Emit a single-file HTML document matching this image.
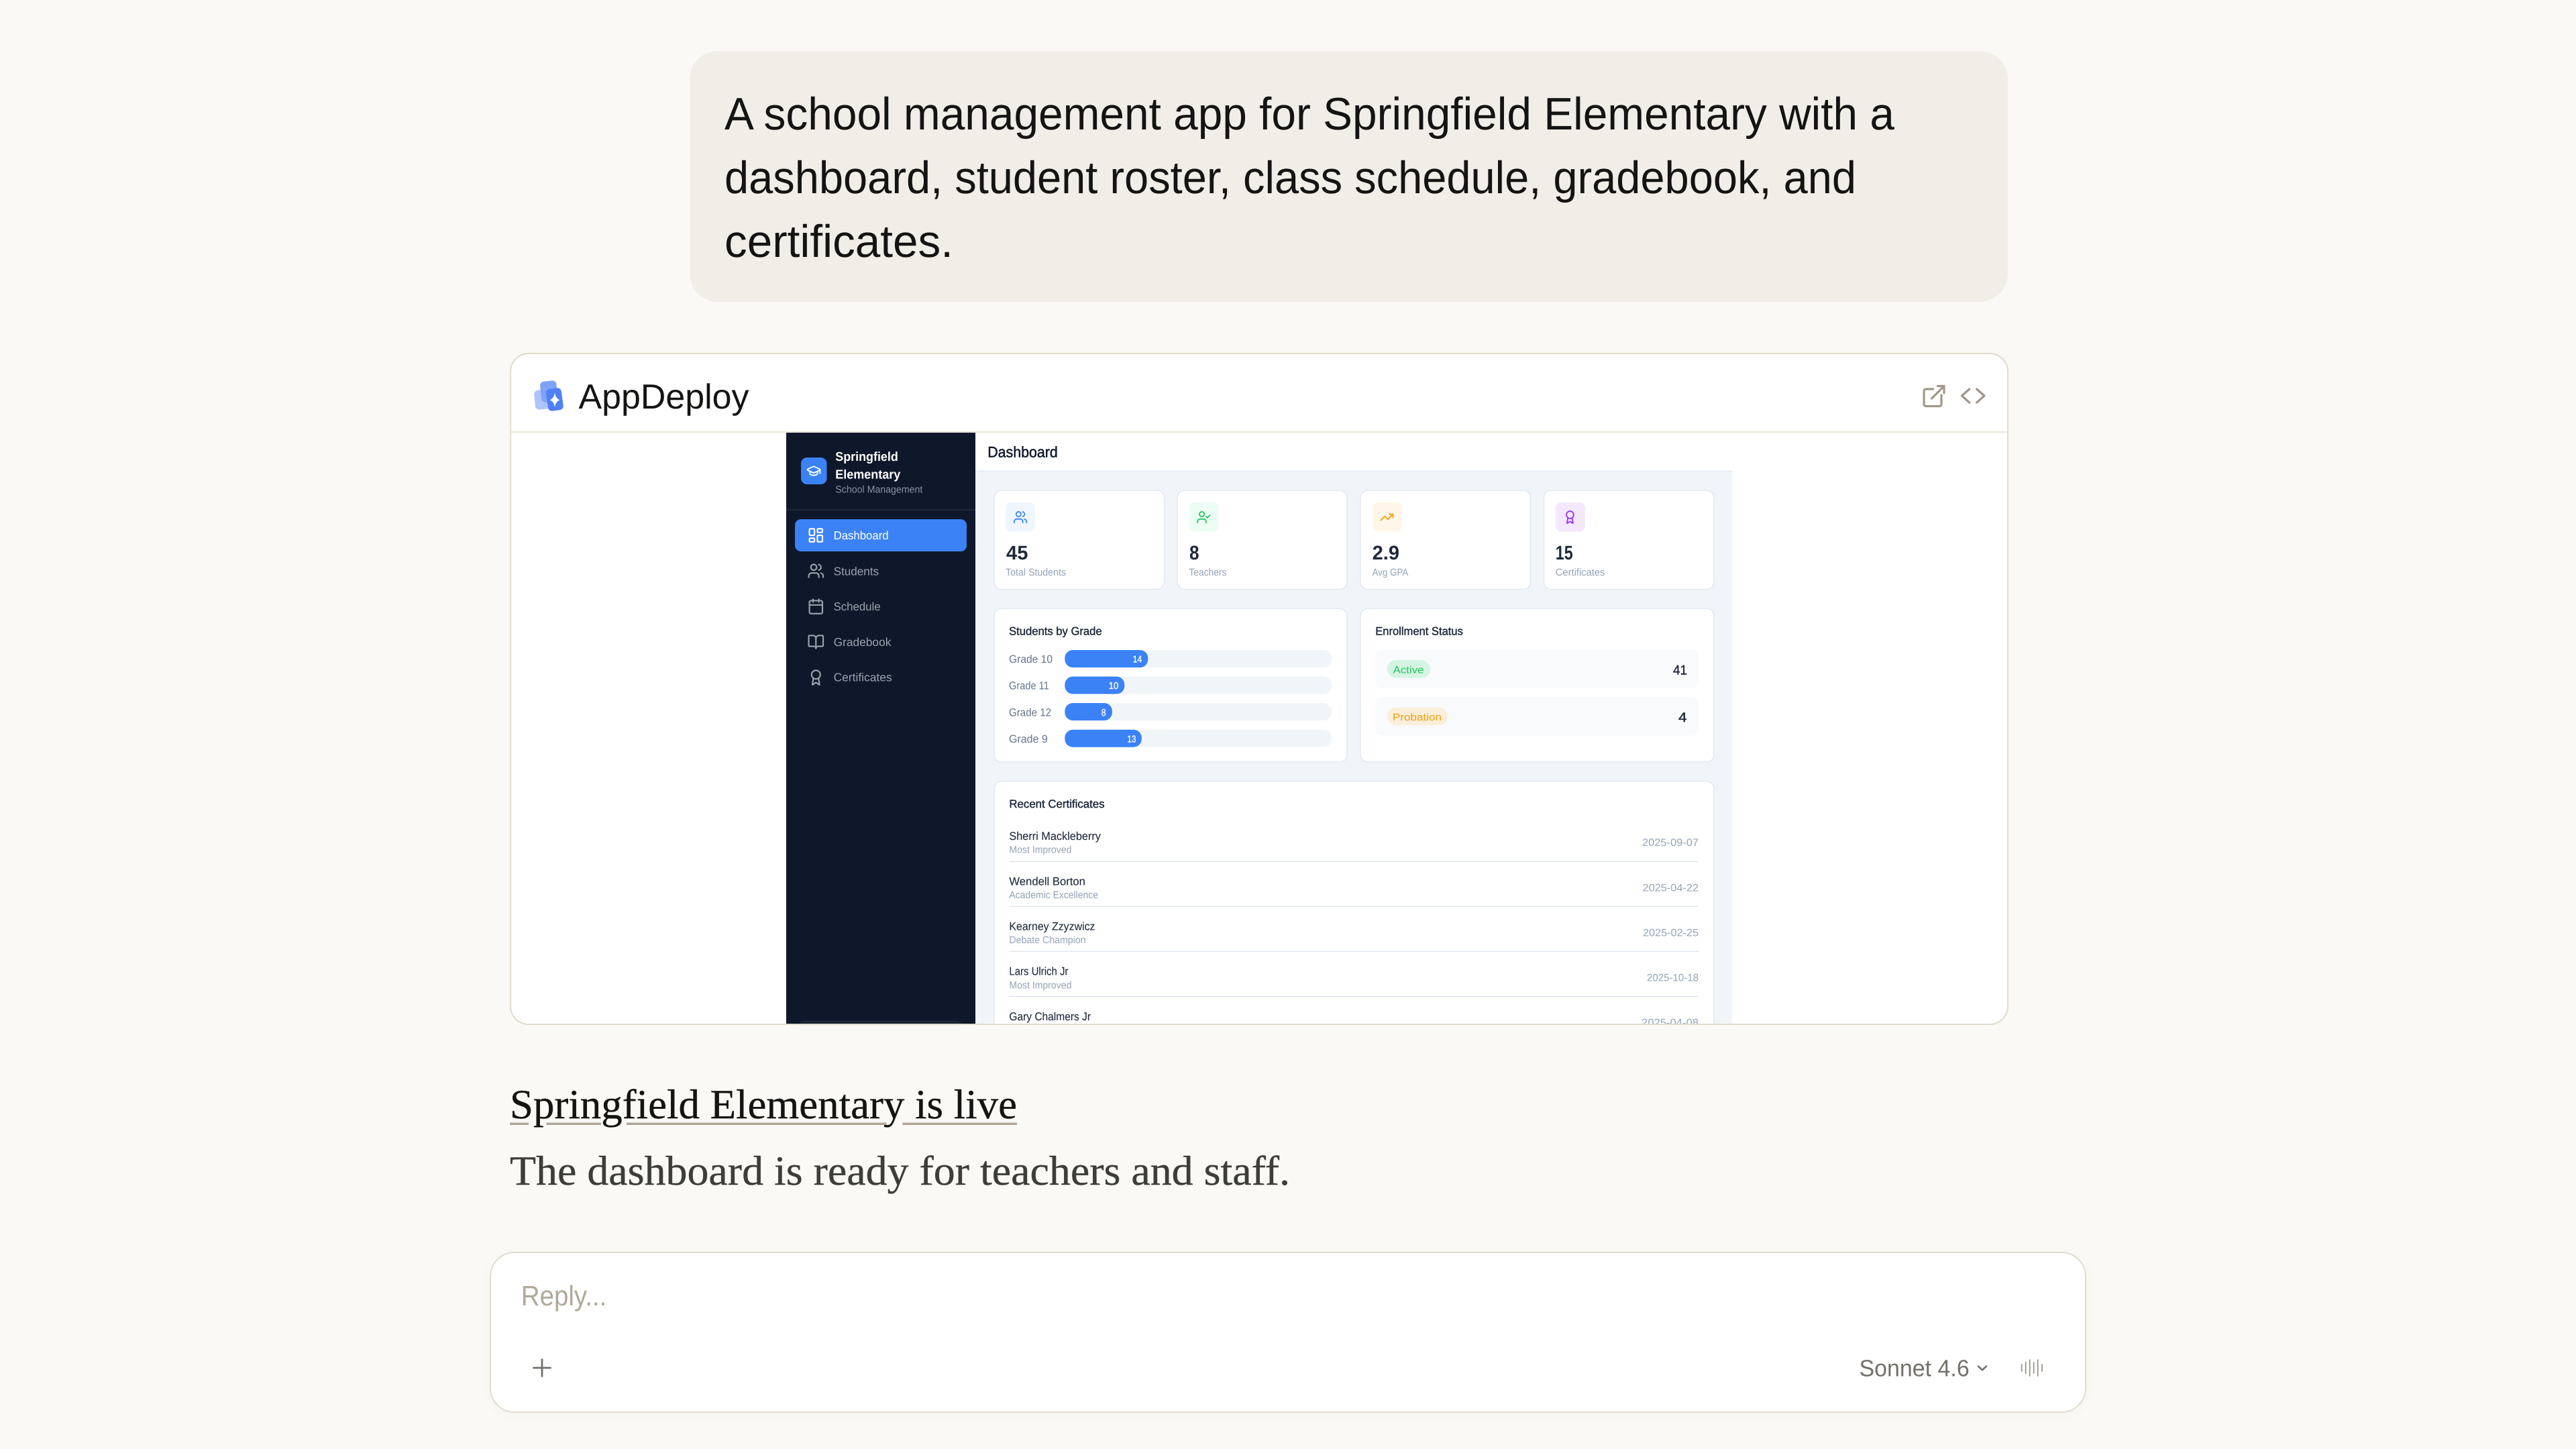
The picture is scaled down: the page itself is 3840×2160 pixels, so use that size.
<!DOCTYPE html>
<html lang="en">
<head>
<meta charset="utf-8">
<title>Springfield Elementary</title>
<style>
html,body{margin:0;padding:0;width:3840px;height:2160px;overflow:hidden;background:#faf9f5}
svg{display:block;position:absolute;left:0;top:0}
text{font-family:"Liberation Sans",Arial,sans-serif;text-rendering:geometricPrecision;white-space:pre}
.serif{font-family:"Liberation Serif","DejaVu Serif",serif}
.b{font-weight:700}
.nav{font-size:17.4px;fill:#9aa1ad}
.lab{font-size:15px;fill:#94a3b8}
.num{font-size:29.5px;font-weight:700;fill:#1e293b}
.ttl{font-size:17px;fill:#1e293b;stroke:#1e293b;stroke-width:.45px}
.grd{font-size:16.5px;fill:#64748b}
.val{font-size:14.5px;fill:#fff;stroke:#fff;stroke-width:.35px}
.nm{font-size:17px;fill:#1e293b;stroke:#1e293b;stroke-width:.12px}
.sub{font-size:15px;fill:#94a3b8}
.dt{font-size:15.5px;fill:#94a3b8}
.ic{fill:none;stroke-linecap:round;stroke-linejoin:round;stroke-width:2}
</style>
</head>
<body>
<svg xmlns="http://www.w3.org/2000/svg" width="3840" height="2160" viewBox="0 0 3840 2160">
<defs>
<clipPath id="cardclip"><rect x="762" y="528" width="2230" height="998" rx="26"/></clipPath>
<g id="i-users"><path d="M16 21v-2a4 4 0 0 0-4-4H6a4 4 0 0 0-4 4v2"/><circle cx="9" cy="7" r="4"/><path d="M22 21v-2a4 4 0 0 0-3-3.870"/><path d="M16 3.130a4 4 0 0 1 0 7.750"/></g>
<g id="i-award"><path d="m15.477 12.890 1.515 8.526a.5.5 0 0 1-.81.47l-3.580-2.687a1 1 0 0 0-1.197 0l-3.586 2.686a.5.5 0 0 1-.81-.469l1.514-8.526"/><circle cx="12" cy="8" r="6"/></g>
</defs>

<!-- user bubble -->
<rect x="1028" y="76" width="1965" height="374" rx="42" fill="#f0eee6"/>
<g font-size="68" fill="#141413">
<text x="1080" y="193" textLength="1744" lengthAdjust="spacingAndGlyphs">A school management app for Springfield Elementary with a</text>
<text x="1080" y="288" textLength="1687" lengthAdjust="spacingAndGlyphs">dashboard, student roster, class schedule, gradebook, and</text>
<text x="1080" y="383" textLength="341" lengthAdjust="spacingAndGlyphs">certificates.</text>
</g>

<!-- artifact card -->
<rect x="761" y="527" width="2232" height="1000" rx="27" fill="#fff" stroke="#e1dccf" stroke-width="2"/>
<rect x="762" y="643" width="2230" height="2" fill="#ebe6db"/>

<!-- AppDeploy logo -->
<rect x="797" y="581" width="24" height="29" rx="6" fill="#aec4f8" transform="rotate(-6 809 595.500)"/>
<rect x="806" y="568" width="24.500" height="31" rx="6" fill="#80a3f5" transform="rotate(-6 818.300 583.500)"/>
<rect x="815.300" y="579" width="23" height="33" rx="6" fill="#4f80f7" transform="rotate(-8 826.800 595.500)"/>
<path d="M827 585.500Q828.500 594 834.500 596.300 828.500 598.500 827 607 825.500 598.500 819.500 596.300 825.500 594 827 585.500Z" fill="#fff"/>
<text x="862.500" y="609" font-size="52" fill="#141413" textLength="254" lengthAdjust="spacingAndGlyphs">AppDeploy</text>

<!-- header actions -->
<g fill="none" stroke="#a09888" stroke-width="3.200" stroke-linecap="round" stroke-linejoin="round">
<path d="M2881.500 580H2871a3 3 0 0 0-3 3v19.500a3 3 0 0 0 3 3h20a3 3 0 0 0 3-3V589"/>
<path d="M2879.500 594 2898 575.500M2888.500 575.500H2898V586"/>
<path d="M2935.700 580 2924.500 590 2935.700 600M2946.700 580 2958 590 2946.700 600"/>
</g>

<!-- embedded app -->
<g clip-path="url(#cardclip)">
<rect x="1172" y="645" width="282" height="885" fill="#0f172a"/>
<rect x="1454" y="645" width="1128" height="885" fill="#f1f5f9"/>
<rect x="1454" y="645" width="1128" height="57" fill="#fff"/>
<rect x="1454" y="701.500" width="1128" height="1.500" fill="#e2e8f0"/>

<!-- sidebar -->
<rect x="1194" y="682" width="38.500" height="40" rx="9" fill="#3b82f6"/>
<g transform="translate(1201.700 690.700) scale(.94)" class="ic" stroke="#fff">
<path d="M21.420 10.922a1 1 0 0 0-.019-1.838L12.830 5.180a2 2 0 0 0-1.660 0L2.600 9.080a1 1 0 0 0 0 1.832l8.570 3.908a2 2 0 0 0 1.660 0z"/><path d="M22 10v6"/><path d="M6 12.500V16a6 3 0 0 0 12 0v-3.500"/>
</g>
<text x="1245.300" y="687" class="b" font-size="19" fill="#fff" textLength="93.500" lengthAdjust="spacingAndGlyphs">Springfield</text>
<text x="1245.300" y="713.700" class="b" font-size="19" fill="#fff" textLength="97" lengthAdjust="spacingAndGlyphs">Elementary</text>
<text x="1245.300" y="734.300" font-size="15" fill="#8791a1" textLength="130" lengthAdjust="spacingAndGlyphs">School Management</text>
<rect x="1172" y="759" width="282" height="2" fill="#1e293b"/>

<rect x="1185" y="774" width="256" height="48" rx="9" fill="#3b82f6"/>
<g transform="translate(1203.400 785.100) scale(1.075)" class="ic" stroke="#fff">
<rect x="3" y="3" width="7" height="9" rx="1"/><rect x="14" y="3" width="7" height="5" rx="1"/><rect x="14" y="12" width="7" height="9" rx="1"/><rect x="3" y="16" width="7" height="5" rx="1"/>
</g>
<text x="1242.600" y="804" font-size="17.400" fill="#fff" textLength="82" lengthAdjust="spacingAndGlyphs">Dashboard</text>

<g class="ic" stroke="#9aa1ad">
<use href="#i-users" transform="translate(1203.400 838.100) scale(1.075)"/>
<g transform="translate(1203.400 891.100) scale(1.075)"><path d="M8 2v4"/><path d="M16 2v4"/><rect x="3" y="4" width="18" height="18" rx="2"/><path d="M3 10h18"/></g>
<g transform="translate(1203.400 944.100) scale(1.075)"><path d="M12 7v14"/><path d="M3 18a1 1 0 0 1-1-1V4a1 1 0 0 1 1-1h5a4 4 0 0 1 4 4 4 4 0 0 1 4-4h5a1 1 0 0 1 1 1v13a1 1 0 0 1-1 1h-6a3 3 0 0 0-3 3 3 3 0 0 0-3-3z"/></g>
<use href="#i-award" transform="translate(1203.400 997.100) scale(1.075)"/>
</g>
<text x="1242.600" y="857.300" class="nav" textLength="67.500" lengthAdjust="spacingAndGlyphs">Students</text>
<text x="1242.600" y="910" class="nav" textLength="70" lengthAdjust="spacingAndGlyphs">Schedule</text>
<text x="1242.600" y="963" class="nav" textLength="85.800" lengthAdjust="spacingAndGlyphs">Gradebook</text>
<text x="1242.600" y="1015.700" class="nav" textLength="87" lengthAdjust="spacingAndGlyphs">Certificates</text>
<rect x="1190.600" y="1521" width="243.400" height="40" rx="9" fill="#1a2535"/>

<!-- page title -->
<text x="1472.200" y="681.700" font-size="22.500" fill="#0f172a" stroke="#0f172a" stroke-width=".5" textLength="104.600" lengthAdjust="spacingAndGlyphs">Dashboard</text>

<!-- stat cards -->
<g fill="#fff" stroke="#e2e8f0" stroke-width="1.500">
<rect x="1482" y="731" width="253.500" height="147.500" rx="11"/>
<rect x="1755" y="731" width="253" height="147.500" rx="11"/>
<rect x="2028" y="731" width="253.500" height="147.500" rx="11"/>
<rect x="2301.500" y="731" width="253.500" height="147.500" rx="11"/>
</g>
<rect x="1499" y="749" width="44" height="43.500" rx="8" fill="#eff6ff"/>
<rect x="1772.400" y="749" width="44" height="43.500" rx="8" fill="#ecfdf3"/>
<rect x="2045.600" y="749" width="44" height="43.500" rx="8" fill="#fff6e9"/>
<rect x="2318.800" y="749" width="44" height="43.500" rx="8" fill="#f3e8ff"/>
<g class="ic">
<use href="#i-users" stroke="#3b82f6" transform="translate(1510.200 760.200) scale(.9)"/>
<g stroke="#22c55e" transform="translate(1783.500 760.200) scale(.9)"><path d="M16 21v-2a4 4 0 0 0-4-4H6a4 4 0 0 0-4 4v2"/><circle cx="9" cy="7" r="4"/><path d="m16 11 2 2 4-4"/></g>
<g stroke="#f59e0b" transform="translate(2056.700 760.200) scale(.9)"><path d="M22 7 13.500 15.500 8.500 10.500 2 17"/><path d="M16 7h6v6"/></g>
<use href="#i-award" stroke="#9333ea" transform="translate(2329.600 760.200) scale(.9)"/>
</g>
<text x="1500" y="834" class="num" textLength="32.400" lengthAdjust="spacingAndGlyphs">45</text>
<text x="1773" y="834" class="num" textLength="14.600" lengthAdjust="spacingAndGlyphs">8</text>
<text x="2045.600" y="834" class="num" textLength="40.400" lengthAdjust="spacingAndGlyphs">2.9</text>
<text x="2318.800" y="834" class="num" textLength="25.900" lengthAdjust="spacingAndGlyphs">15</text>
<text x="1499" y="858" class="lab" textLength="90" lengthAdjust="spacingAndGlyphs">Total Students</text>
<text x="1772.400" y="858" class="lab" textLength="56" lengthAdjust="spacingAndGlyphs">Teachers</text>
<text x="2045.600" y="858" class="lab" textLength="53.700" lengthAdjust="spacingAndGlyphs">Avg GPA</text>
<text x="2318.800" y="858" class="lab" textLength="73.600" lengthAdjust="spacingAndGlyphs">Certificates</text>

<!-- Students by grade -->
<g fill="#fff" stroke="#e2e8f0" stroke-width="1.500">
<rect x="1482" y="907" width="526" height="229" rx="11"/>
<rect x="2028" y="907" width="527" height="229" rx="11"/>
<rect x="1482" y="1164.500" width="1073" height="400" rx="11"/>
</g>
<text x="1504" y="946.500" class="ttl" textLength="138.700" lengthAdjust="spacingAndGlyphs">Students by Grade</text>
<g fill="#f1f5f9">
<rect x="1587.300" y="969" width="398" height="26" rx="12"/>
<rect x="1587.300" y="1008.500" width="398" height="26" rx="12"/>
<rect x="1587.300" y="1048" width="398" height="26" rx="12"/>
<rect x="1587.300" y="1087.700" width="398" height="26" rx="12"/>
</g>
<g fill="#3b82f6">
<rect x="1587.300" y="969" width="124" height="26" rx="12"/>
<rect x="1587.300" y="1008.500" width="89" height="26" rx="12"/>
<rect x="1587.300" y="1048" width="70.600" height="26" rx="12"/>
<rect x="1587.300" y="1087.700" width="114.500" height="26" rx="12"/>
</g>
<text x="1504" y="988" class="grd" textLength="65" lengthAdjust="spacingAndGlyphs">Grade 10</text>
<text x="1504" y="1027.700" class="grd" textLength="59.800" lengthAdjust="spacingAndGlyphs">Grade 11</text>
<text x="1504" y="1067.300" class="grd" textLength="63" lengthAdjust="spacingAndGlyphs">Grade 12</text>
<text x="1504" y="1107" class="grd" textLength="57.700" lengthAdjust="spacingAndGlyphs">Grade 9</text>
<text x="1688.800" y="987.700" class="val" textLength="13.500" lengthAdjust="spacingAndGlyphs">14</text>
<text x="1652.700" y="1027.200" class="val" textLength="14.600" lengthAdjust="spacingAndGlyphs">10</text>
<text x="1641.700" y="1066.800" class="val" textLength="6.800" lengthAdjust="spacingAndGlyphs">8</text>
<text x="1680.400" y="1106.500" class="val" textLength="13.100" lengthAdjust="spacingAndGlyphs">13</text>

<!-- Enrollment -->
<text x="2050.200" y="946.500" class="ttl" textLength="130.700" lengthAdjust="spacingAndGlyphs">Enrollment Status</text>
<rect x="2050.200" y="969" width="481.500" height="57" rx="8" fill="#f8fafc"/>
<rect x="2050.200" y="1039.500" width="481.500" height="57" rx="8" fill="#f8fafc"/>
<rect x="2068" y="984" width="63.800" height="26.500" rx="13" fill="#d6f4e2"/>
<rect x="2068" y="1054.600" width="90.300" height="26.500" rx="13" fill="#fbeedb"/>
<text x="2076.700" y="1003.600" font-size="15" fill="#22c55e" textLength="45.800" lengthAdjust="spacingAndGlyphs">Active</text>
<text x="2076" y="1074" font-size="15" fill="#f59e0b" textLength="73" lengthAdjust="spacingAndGlyphs">Probation</text>
<text x="2494" y="1005.300" font-size="20" fill="#1e293b" stroke="#1e293b" stroke-width=".45" textLength="21" lengthAdjust="spacingAndGlyphs">41</text>
<text x="2502" y="1076" font-size="20" fill="#1e293b" stroke="#1e293b" stroke-width=".45" textLength="12.500" lengthAdjust="spacingAndGlyphs">4</text>

<!-- Recent certificates -->
<text x="1504.400" y="1204" class="ttl" textLength="142.200" lengthAdjust="spacingAndGlyphs">Recent Certificates</text>
<text x="1504.400" y="1252" class="nm" textLength="136.500" lengthAdjust="spacingAndGlyphs">Sherri Mackleberry</text>
<text x="1504.400" y="1271.700" class="sub" textLength="93" lengthAdjust="spacingAndGlyphs">Most Improved</text>
<text x="2448" y="1261" class="dt" textLength="84" lengthAdjust="spacingAndGlyphs">2025-09-07</text>
<rect x="1504.400" y="1283.500" width="1027.600" height="1.500" fill="#e2e8f0"/>
<text x="1504.400" y="1319.300" class="nm" textLength="113.500" lengthAdjust="spacingAndGlyphs">Wendell Borton</text>
<text x="1504.400" y="1339" class="sub" textLength="132.600" lengthAdjust="spacingAndGlyphs">Academic Excellence</text>
<text x="2448.500" y="1328.300" class="dt" textLength="83.500" lengthAdjust="spacingAndGlyphs">2025-04-22</text>
<rect x="1504.400" y="1350.500" width="1027.600" height="1.500" fill="#e2e8f0"/>
<text x="1504.400" y="1386.300" class="nm" textLength="128.100" lengthAdjust="spacingAndGlyphs">Kearney Zzyzwicz</text>
<text x="1504.400" y="1406" class="sub" textLength="114.200" lengthAdjust="spacingAndGlyphs">Debate Champion</text>
<text x="2449" y="1395.300" class="dt" textLength="83" lengthAdjust="spacingAndGlyphs">2025-02-25</text>
<rect x="1504.400" y="1417.500" width="1027.600" height="1.500" fill="#e2e8f0"/>
<text x="1504.400" y="1453.700" class="nm" textLength="88" lengthAdjust="spacingAndGlyphs">Lars Ulrich Jr</text>
<text x="1504.400" y="1473.300" class="sub" textLength="93" lengthAdjust="spacingAndGlyphs">Most Improved</text>
<text x="2455" y="1462.300" class="dt" textLength="77" lengthAdjust="spacingAndGlyphs">2025-10-18</text>
<rect x="1504.400" y="1484.500" width="1027.600" height="1.500" fill="#e2e8f0"/>
<text x="1504.400" y="1521" class="nm" textLength="121.600" lengthAdjust="spacingAndGlyphs">Gary Chalmers Jr</text>
<text x="2447" y="1529.700" class="dt" textLength="85" lengthAdjust="spacingAndGlyphs">2025-04-08</text>
</g>
<rect x="761" y="527" width="2232" height="1000" rx="27" fill="none" stroke="#e1dccf" stroke-width="2"/>

<!-- assistant message -->
<text x="760" y="1667" class="serif" font-size="62" fill="#141413" stroke="#141413" stroke-width=".4" textLength="756" lengthAdjust="spacingAndGlyphs">Springfield Elementary is live</text>
<g fill="#b0a698">
<rect x="760" y="1673.500" width="28" height="3.500"/>
<rect x="814.600" y="1673.500" width="81.300" height="3.500"/>
<rect x="934" y="1673.500" width="387.300" height="3.500"/>
<rect x="1345.300" y="1673.500" width="170.700" height="3.500"/>
</g>
<text x="760" y="1766" class="serif" font-size="62" fill="#3d3d3a" stroke="#3d3d3a" stroke-width=".4" textLength="1163" lengthAdjust="spacingAndGlyphs">The dashboard is ready for teachers and staff.</text>

<!-- reply box -->
<rect x="731" y="1867" width="2378" height="238" rx="36" fill="#fff" stroke="#e1dccf" stroke-width="2" style="filter:drop-shadow(0 4px 8px rgba(0,0,0,.025))"/>
<text x="776.800" y="1946" font-size="42" fill="#b0a99b" textLength="127.500" lengthAdjust="spacingAndGlyphs">Reply...</text>
<path d="M808 2026.500v25M795.500 2039h25" fill="none" stroke="#73706a" stroke-width="2.800" stroke-linecap="round"/>
<text x="2771.500" y="2051.700" font-size="35" fill="#73706a" textLength="164.200" lengthAdjust="spacingAndGlyphs">Sonnet 4.6</text>
<path d="M2949 2036.700 2955 2042.300 2961 2036.700" fill="none" stroke="#73706a" stroke-width="2.600" stroke-linecap="round" stroke-linejoin="round"/>
<path d="M3013.700 2034v10M3019.700 2030.500v17M3025.700 2027v24M3031.700 2031v16M3037.700 2027v24M3044 2034v10" fill="none" stroke="#9a9488" stroke-width="1.800" stroke-linecap="round"/>
</svg>
</body>
</html>
